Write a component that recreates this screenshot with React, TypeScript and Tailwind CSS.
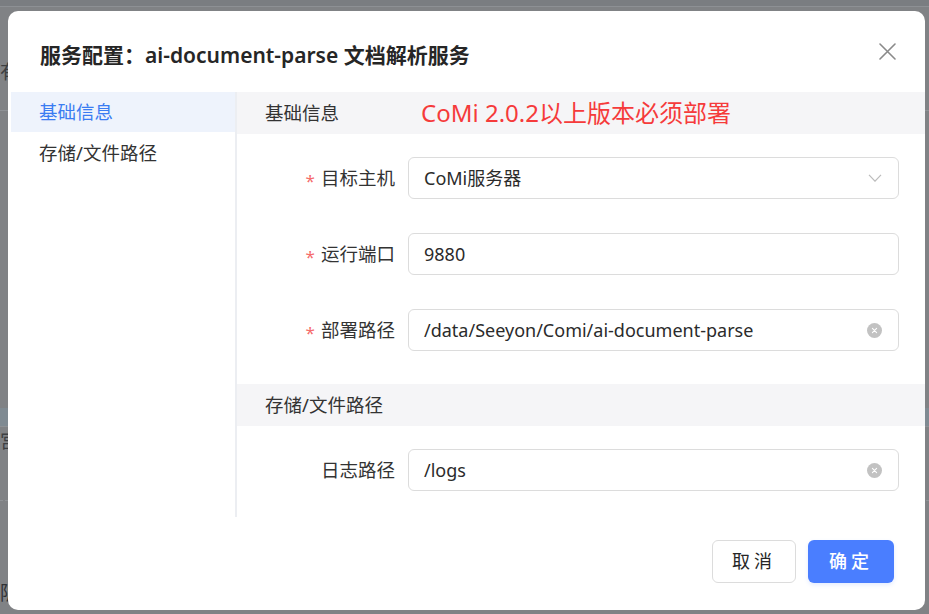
const font = "font-['Segoe_UI','Noto_Sans','Noto_Sans_CJK_SC',sans-serif]";

function ClearIcon() {
  return (
    <span className="flex h-[15px] w-[15px] items-center justify-center rounded-full bg-[#c2c2c2]">
      <svg viewBox="0 0 10 10" className="h-[7px] w-[7px]">
        <path d="M2 2 L8 8 M8 2 L2 8" stroke="#fff" strokeWidth="1.6" strokeLinecap="round" />
      </svg>
    </span>
  );
}

function Chevron() {
  return (
    <svg viewBox="0 0 14 8" className="h-[8px] w-[14px]">
      <path d="M1 0.8 L7 7.2 L13 0.8" fill="none" stroke="#bcbcbc" strokeWidth="1.2" />
    </svg>
  );
}

interface FieldRowProps {
  label: string;
  value: string;
  required?: boolean;
  suffix: "select" | "clear" | "none";
  className?: string;
}

function FieldRow({ label, value, required, suffix, className }: FieldRowProps) {
  return (
    <div className={`flex items-center pr-[26px] ${className ?? ""}`}>
      <div className="flex w-[158px] shrink-0 items-center justify-end text-[18.5px] text-[#333]">
        {required && <span className="mr-[6px] mt-[4px] text-[17px] leading-none text-[#f56c6c]">*</span>}
        <span>{label}</span>
      </div>
      <div className="ml-[13px] flex h-[42px] flex-1 items-center rounded-[6px] border border-[#dcdcdc] bg-white pl-[15px] pr-[16px]">
        <span className="flex-1 text-[18px] text-[#2b2b2b]">{value}</span>
        {suffix === "select" && <Chevron />}
        {suffix === "clear" && <ClearIcon />}
      </div>
    </div>
  );
}

function SectionHeader({ title, note }: { title: string; note?: string }) {
  return (
    <div className="flex h-[42px] items-center bg-[#f5f5f7] pl-[28px]">
      <span className="text-[18.5px] text-[#333]">{title}</span>
      {note && <span className="ml-[82px] text-[24px] text-[#f53b3b]">{note}</span>}
    </div>
  );
}

export default function App() {
  return (
    <div className={`relative h-[614px] w-[929px] overflow-hidden bg-[#808285] ${font}`}>
      {/* faded page behind the overlay */}
      <div className="flex flex-col">
        <div className="h-[7px] border-b border-[#8d9094] bg-[#7a7d81]" />
        <div className="h-[54px]" />
        <div className="h-[22px] text-[19px] leading-[22px] text-[#3d3f42]">有</div>
        <div className="h-[28px] border-b border-[#8f9296]" />
        <div className="h-[297px]" />
        <div className="h-[19px] border-b border-[#8e9195] bg-[#7f8a92]" />
        <div className="h-[28px] text-[19px] leading-[28px] text-[#3d3f42]">宫</div>
        <div className="h-[46px] border-b border-dashed border-[#8f9296]" />
        <div className="h-[82px]" />
        <div className="h-[20px] text-[19px] leading-[20px] text-[#2f3134]">阪</div>
      </div>

      <div className="absolute left-2 top-[11px] flex h-[599px] w-[917px] flex-col rounded-[10px] bg-white">
        <div className="flex h-[81px] items-start justify-between pl-[32px] pr-[29px] pt-[29px]">
          <h2 className="text-[21px] font-semibold leading-[30px] text-[#262626]">
            服务配置：ai-document-parse 文档解析服务
          </h2>
          <svg viewBox="0 0 17 17" className="mt-[3px] h-[17px] w-[17px]">
            <path d="M1 1 L16 16 M16 1 L1 16" stroke="#8a8a8a" strokeWidth="1.6" strokeLinecap="round" />
          </svg>
        </div>

        <div className="flex h-[425px]">
          <nav className="flex w-[229px] shrink-0 flex-col border-r-2 border-[#eceef2] pl-[3px]">
            <div className="flex h-[40px] items-center bg-[#eef3fc] pl-[28px] text-[18.5px] text-[#3a7cf2]">
              基础信息
            </div>
            <div className="flex h-[41px] items-center pl-[28px] text-[18.5px] text-[#333]">存储/文件路径</div>
          </nav>

          <div className="flex flex-1 flex-col">
            <SectionHeader title="基础信息" note="CoMi 2.0.2以上版本必须部署" />
            <FieldRow className="mt-[23px]" label="目标主机" value="CoMi服务器" required suffix="select" />
            <FieldRow className="mt-[34px]" label="运行端口" value="9880" required suffix="none" />
            <FieldRow
              className="mt-[34px]"
              label="部署路径"
              value="/data/Seeyon/Comi/ai-document-parse"
              required
              suffix="clear"
            />
            <div className="mt-[33px]">
              <SectionHeader title="存储/文件路径" />
            </div>
            <FieldRow className="mt-[23px]" label="日志路径" value="/logs" suffix="clear" />
          </div>
        </div>

        <div className="flex justify-end gap-[12px] pr-[31px] pt-[23px]">
          <button className="h-[43px] w-[84px] rounded-[6px] border border-[#dcdcdc] bg-white text-[18px] tracking-[4px] text-[#262626]">
            取消
          </button>
          <button className="h-[43px] w-[86px] rounded-[6px] bg-[#4a7eff] text-[18px] font-medium tracking-[4px] text-white shadow-[0_2px_4px_rgba(74,126,255,0.15)]">
            确定
          </button>
        </div>
      </div>
    </div>
  );
}
